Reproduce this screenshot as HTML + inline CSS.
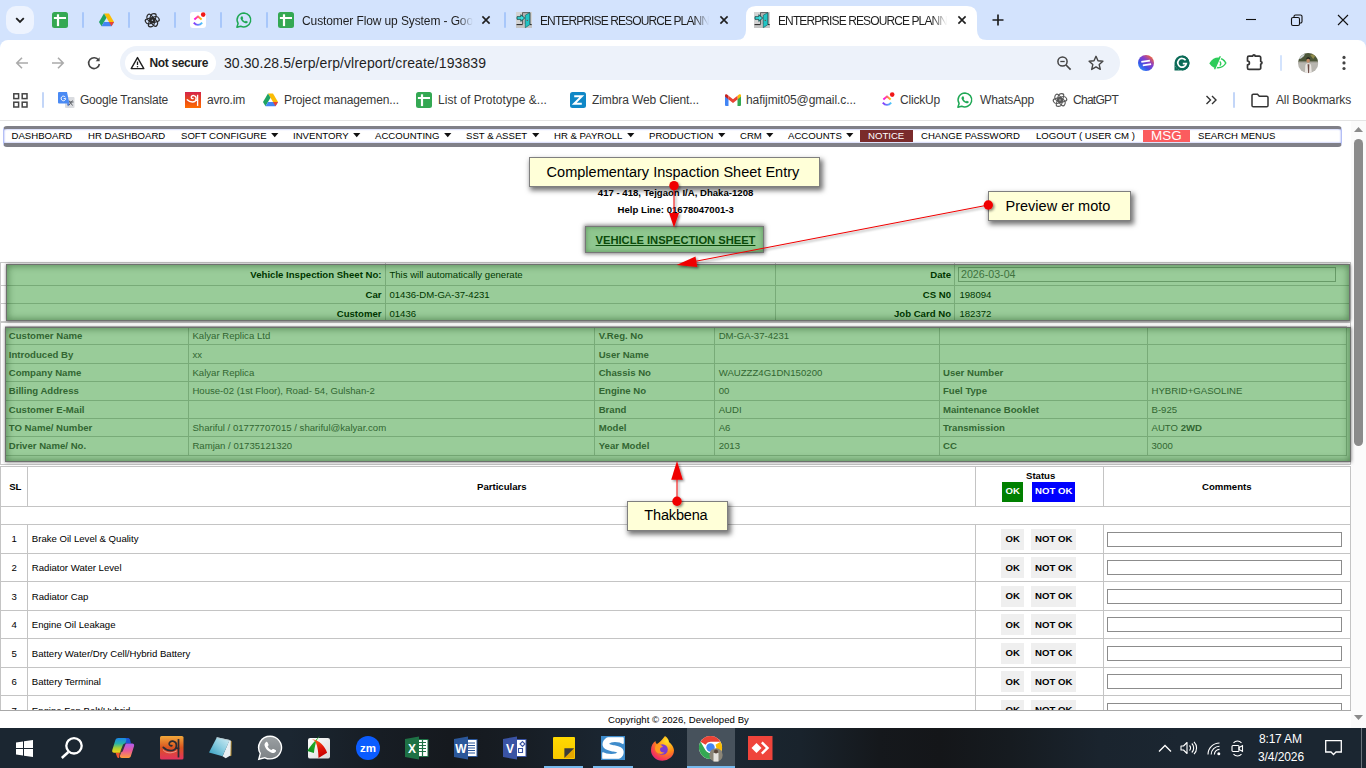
<!DOCTYPE html>
<html lang="en"><head><meta charset="utf-8"><title>ENTERPRISE RESOURCE PLANNING</title>
<style>
html,body{margin:0;padding:0}
body{width:1366px;height:768px;overflow:hidden;position:relative;background:#fff;font-family:"Liberation Sans",sans-serif;}
.t{position:absolute;white-space:nowrap;}
.a{position:absolute;}
#tabbar{position:absolute;left:0;top:0;width:1366px;height:50px;background:#d3e3fd;}
#toolbar{position:absolute;left:0;top:40px;width:1366px;height:42px;background:#fff;border-radius:8px 8px 0 0;}
#bm{position:absolute;left:0;top:82px;width:1366px;height:38px;background:#fff;border-bottom:1px solid #e4e4e4;}
#page{position:absolute;left:0;top:121px;width:1366px;height:607px;background:#fff;overflow:hidden;}
#taskbar{position:absolute;left:0;top:728px;width:1366px;height:40px;background:linear-gradient(90deg,#1b2631 0,#1b2631 290px,#171d24 380px,#15191e 450px,#171d24 520px,#1a2530 600px,#1b2732 720px,#19232c 800px,#15181c 880px,#141619 940px,#161b20 1010px,#1a242e 1100px,#1b2631 1180px,#1b2631 100%);}
.sep{position:absolute;width:2px;border-radius:1px;background:#a8c7fa;}
.fade{-webkit-mask-image:linear-gradient(90deg,#000 calc(100% - 15px),transparent);mask-image:linear-gradient(90deg,#000 calc(100% - 15px),transparent);overflow:hidden;}
svg{position:absolute;overflow:visible}
table{border-collapse:collapse;}
</style></head><body>

<div id="tabbar">
<div class="a" style="left:6px;top:6px;width:28px;height:28px;border-radius:10px;background:#edf3fe"></div>
<svg style="left:14px;top:14px" width="12" height="12" viewBox="0 0 12 12"><path d="M2.2 4.2 L6 8 L9.8 4.2" fill="none" stroke="#1f1f1f" stroke-width="1.8"/></svg>
<svg style="left:52px;top:12px" width="16" height="16" viewBox="0 0 16 16"><rect width="16" height="16" rx="2.500" fill="#34a853"/><path d="M1.900 6h12.100" stroke="#fff" stroke-width="2" fill="none"/><path d="M6 2.300v11.800" stroke="#fff" stroke-width="2.200" fill="none"/></svg>
<div class="sep" style="left:82px;top:12px;height:16px"></div>
<svg style="left:99px;top:13px" width="15" height="14" viewBox="0 0 15 14"><path d="M5 0.5h5L15 9h-5z" fill="#fbbc04"/><path d="M5 0.5L0 9l2.5 4.3L7.5 4.8z" fill="#1ea362"/><path d="M2.5 13.3h10L15 9H5z" fill="#4285f4"/><path d="M10 9h5l-2.5 4.3z" fill="#ea4335"/></svg>
<div class="sep" style="left:128px;top:12px;height:16px"></div>
<svg style="left:145px;top:12.7px" width="14.5" height="14.5" viewBox="-8 -8 16 16"><g fill="none" stroke="#2a2a2a" stroke-width="1.25"><rect x="-3.100" y="-7.300" width="6.200" height="8.800" rx="3.100" transform="rotate(0) skewX(-14)"/><rect x="-3.100" y="-7.300" width="6.200" height="8.800" rx="3.100" transform="rotate(60) skewX(-14)"/><rect x="-3.100" y="-7.300" width="6.200" height="8.800" rx="3.100" transform="rotate(120) skewX(-14)"/><rect x="-3.100" y="-7.300" width="6.200" height="8.800" rx="3.100" transform="rotate(180) skewX(-14)"/><rect x="-3.100" y="-7.300" width="6.200" height="8.800" rx="3.100" transform="rotate(240) skewX(-14)"/><rect x="-3.100" y="-7.300" width="6.200" height="8.800" rx="3.100" transform="rotate(300) skewX(-14)"/></g></svg>
<div class="sep" style="left:174px;top:12px;height:16px"></div>
<svg style="left:190px;top:12px" width="16" height="16" viewBox="0 0 16 16"><defs><linearGradient id="cu190" x1="0" x2="1"><stop offset="0" stop-color="#8930fd"/><stop offset="1" stop-color="#49ccf9"/></linearGradient><linearGradient id="cv190" x1="0" x2="1"><stop offset="0" stop-color="#ff02f0"/><stop offset="1" stop-color="#ffc800"/></linearGradient></defs><rect width="16" height="16" rx="3" fill="#fff"/><path d="M3.8 10.6c2.4 3 6 3 8.4 0" fill="none" stroke="url(#cu190)" stroke-width="1.9"/><path d="M4.4 7.4L8 4.4l3.6 3" fill="none" stroke="url(#cv190)" stroke-width="1.9"/><circle cx="13.2" cy="2.6" r="2.3" fill="#f01818"/></svg>
<div class="sep" style="left:220px;top:12px;height:16px"></div>
<svg style="left:236px;top:12px" width="16" height="16" viewBox="0 0 16 16"><path d="M8.100 .900a7 7 0 0 0-6 10.600L.900 15.200l3.800-1A7 7 0 1 0 8.100 .900z" fill="none" stroke="#1fa855" stroke-width="1.500" stroke-linejoin="round"/><path d="M5.400 4.500c.3-.4.900-.4 1.100.1l.6 1.300c.1.300.1.600-.2.800l-.4.400c.6 1.100 1.400 1.900 2.500 2.400l.5-.5c.2-.2.500-.3.800-.1l1.200.6c.4.200.5.700.1 1-.6.700-1.300 1-2.200.8-2.300-.6-4.300-2.500-4.900-4.700-.2-.8.100-1.500.9-2.100z" fill="#1fa855"/></svg>
<div class="sep" style="left:266px;top:12px;height:16px"></div>
<svg style="left:278px;top:12px" width="16" height="16" viewBox="0 0 16 16"><rect width="16" height="16" rx="2.500" fill="#34a853"/><path d="M1.900 6h12.100" stroke="#fff" stroke-width="2" fill="none"/><path d="M6 2.300v11.800" stroke="#fff" stroke-width="2.200" fill="none"/></svg>
<span class="t fade" style="left:302px;top:12.70px;line-height:17px;font-size:12px;color:#1f1f1f;letter-spacing:-0.105px;width:171px;">Customer Flow up System - Goo</span>
<svg style="left:480px;top:14px" width="12" height="12" viewBox="-6 -6 12 12"><path d="M-3.6 -3.6L3.6 3.6M3.6 -3.6L-3.6 3.6" stroke="#1f1f1f" stroke-width="1.6" fill="none"/></svg>
<div class="sep" style="left:504px;top:12px;height:16px"></div>
<svg style="left:516px;top:12px" width="16" height="16" viewBox="0 0 16 16"><rect width="16" height="16" fill="#d2d2d2"/><rect y="13" width="16" height="3" fill="#c4c4c4"/><path d="M6.500 12.400V.600H14v11.800" fill="#b4b4b4" stroke="#555" stroke-width=".9"/><path d="M.500 12.600H6.500M14 12.600h1.700" stroke="#222" stroke-width="1"/><path d="M13.700 .700L9.300 3.200v12.500l4.400-2.900z" fill="#20c4c4" stroke="#0c5a5a" stroke-width=".6"/><circle cx="11.300" cy="8.300" r=".65" fill="#7a3a3a"/><path d="M1 4.700h3.800V2.700L8.700 6 4.800 9.400V7.300H1z" fill="#3ddede" stroke="#0a3f3f" stroke-width=".8" stroke-linejoin="round"/></svg>
<span class="t fade" style="left:540px;top:12.70px;line-height:17px;font-size:12px;color:#1f1f1f;letter-spacing:-0.893px;width:169px;">ENTERPRISE RESOURCE PLANNI</span>
<svg style="left:718px;top:14px" width="12" height="12" viewBox="-6 -6 12 12"><path d="M-3.6 -3.6L3.6 3.6M3.6 -3.6L-3.6 3.6" stroke="#1f1f1f" stroke-width="1.6" fill="none"/></svg>
<svg style="left:736px;top:6px" width="256" height="34" viewBox="0 0 256 34"><path d="M0 34 Q10 34 10 24 V10 Q10 0 20 0 H231 Q241 0 241 10 V24 Q241 34 251 34 Z" fill="#fff"/></svg>
<svg style="left:754px;top:12px" width="16" height="16" viewBox="0 0 16 16"><rect width="16" height="16" fill="#d2d2d2"/><rect y="13" width="16" height="3" fill="#c4c4c4"/><path d="M6.500 12.400V.600H14v11.800" fill="#b4b4b4" stroke="#555" stroke-width=".9"/><path d="M.500 12.600H6.500M14 12.600h1.700" stroke="#222" stroke-width="1"/><path d="M13.700 .700L9.300 3.200v12.500l4.400-2.900z" fill="#20c4c4" stroke="#0c5a5a" stroke-width=".6"/><circle cx="11.300" cy="8.300" r=".65" fill="#7a3a3a"/><path d="M1 4.700h3.800V2.700L8.700 6 4.800 9.400V7.300H1z" fill="#3ddede" stroke="#0a3f3f" stroke-width=".8" stroke-linejoin="round"/></svg>
<span class="t fade" style="left:778px;top:12.70px;line-height:17px;font-size:12px;color:#1f1f1f;letter-spacing:-0.893px;width:169px;">ENTERPRISE RESOURCE PLANNI</span>
<svg style="left:956px;top:14px" width="12" height="12" viewBox="-6 -6 12 12"><path d="M-3.6 -3.6L3.6 3.6M3.6 -3.6L-3.6 3.6" stroke="#1f1f1f" stroke-width="1.6" fill="none"/></svg>
<svg style="left:991px;top:13px" width="14" height="14" viewBox="0 0 14 14"><path d="M7 1.500v11M1.500 7h11" stroke="#1f1f1f" stroke-width="1.7" fill="none"/></svg>
<svg style="left:1240px;top:10px" width="120" height="20" viewBox="0 0 120 20"><path d="M6 9.500h10" stroke="#111" stroke-width="1.100" fill="none"/><rect x="51.500" y="7.500" width="8" height="8" rx="1.500" fill="none" stroke="#111" stroke-width="1.100"/><path d="M54 7.500V6.500a1.500 1.500 0 0 1 1.500-1.500h5a1.500 1.500 0 0 1 1.500 1.500v5a1.500 1.500 0 0 1-1.500 1.500h-1" fill="none" stroke="#111" stroke-width="1.100"/><path d="M98 5l10 10M108 5l-10 10" stroke="#111" stroke-width="1.100" fill="none"/></svg>
</div>
<div id="toolbar"></div>
<svg style="left:15px;top:56px" width="14" height="14" viewBox="0 0 14 14"><path d="M13 7H2M7 1.800L1.800 7 7 12.200" stroke="#ababab" stroke-width="1.600" fill="none"/></svg>
<svg style="left:51px;top:56px" width="14" height="14" viewBox="0 0 14 14"><path d="M1 7h11M7 1.800L12.200 7 7 12.200" stroke="#ababab" stroke-width="1.600" fill="none"/></svg>
<svg style="left:87px;top:56px" width="14" height="14" viewBox="0 0 14 14"><path d="M11.600 4.200A5.400 5.400 0 1 0 12.400 8" stroke="#444" stroke-width="1.600" fill="none"/><path d="M12.600 1.200v4h-4z" fill="#444"/></svg>
<div class="a" style="left:120px;top:46px;width:1000px;height:34px;border-radius:17px;background:#edf2fa"></div>
<div class="a" style="left:125px;top:51px;width:91px;height:24px;border-radius:12px;background:#fff"></div>
<svg style="left:130px;top:56px" width="15" height="14" viewBox="0 0 15 14"><path d="M7.500 1.600L13.800 12.600H1.200z" fill="none" stroke="#1f1f1f" stroke-width="1.400" stroke-linejoin="round"/><path d="M7.500 5.600v3.400" stroke="#1f1f1f" stroke-width="1.300"/><circle cx="7.500" cy="10.700" r=".8" fill="#1f1f1f"/></svg>
<span class="t" style="left:149.5px;top:54.50px;line-height:17px;font-size:12px;color:#1f1f1f;letter-spacing:-0.352px;font-weight:bold;">Not secure</span>
<span class="t" style="left:224px;top:53.40px;line-height:20px;font-size:14px;color:#1f1f1f;letter-spacing:0.088px;">30.30.28.5/erp/erp/vlreport/create/193839</span>
<svg style="left:1056px;top:55px" width="16" height="16" viewBox="0 0 16 16"><circle cx="6.500" cy="6.500" r="4.600" fill="none" stroke="#444" stroke-width="1.500"/><path d="M10 10l4.600 4.600" stroke="#444" stroke-width="1.700"/><path d="M4.300 6.500h4.400" stroke="#444" stroke-width="1.300"/></svg>
<svg style="left:1088px;top:55px" width="16" height="16" viewBox="0 0 16 16"><path d="M8 1.300l2 4.500 4.900.5-3.700 3.300 1.100 4.800L8 11.900l-4.300 2.500 1.100-4.800L1.100 6.300l4.900-.5z" fill="none" stroke="#444" stroke-width="1.400" stroke-linejoin="round"/></svg>
<svg style="left:1138px;top:55px" width="16" height="16" viewBox="0 0 16 16"><defs><linearGradient id="ex1" x1=".15" y1=".9" x2=".85" y2=".1"><stop offset="0" stop-color="#2f8af5"/><stop offset=".3" stop-color="#3f4fe6"/><stop offset=".65" stop-color="#8a3fc8"/><stop offset="1" stop-color="#f0643c"/></linearGradient></defs><circle cx="8" cy="8" r="8" fill="url(#ex1)"/><path d="M3.300 6.900l8.600-1.300M4.800 10.400l8.300-1.300" stroke="#fff" stroke-width="1.800"/></svg>
<svg style="left:1174px;top:55px" width="16" height="16" viewBox="0 0 16 16"><path d="M8 .500a7.500 7.500 0 1 1-7.500 7.500V15.500H8" fill="#0b6b57"/><circle cx="8" cy="8" r="7.500" fill="#0b6b57"/><path d="M11.600 5.300A4.300 4.300 0 1 0 12.300 8.600H8.800" fill="none" stroke="#fff" stroke-width="1.700"/></svg>
<svg style="left:1209px;top:55px" width="18" height="16" viewBox="0 0 18 16"><path d="M1.200 8.300C3.500 4.800 6.300 3.300 9.300 3.300s5.700 1.500 7.500 4.700c-1.800 3.300-4.700 4.700-7.700 4.700s-5.800-1.400-7.900-4.400z" fill="none" stroke="#2ecc5a" stroke-width="1.500"/><path d="M1.200 8.300C3.500 4.800 6.300 3.300 9.300 3.300l1.800.2-3.800 9-1.500-.5C4 11.300 2.400 10 1.200 8.300z" fill="#2ecc5a"/><path d="M12.300 1.500L6.300 14.500" stroke="#fff" stroke-width="1.500"/><path d="M11.300 1.200L5.600 14.200" stroke="#2ecc5a" stroke-width="1.400"/><path d="M10.800 6.300a3.200 3.200 0 0 1 0 4.400" fill="none" stroke="#2ecc5a" stroke-width="1.200"/></svg>
<svg style="left:1245px;top:54px" width="18" height="18" viewBox="0 0 18 18"><path d="M4 2.200H7.600a1.300 1.300 0 0 1 2.600 0H14.200a1.500 1.500 0 0 1 1.500 1.500V7.500a1.300 1.300 0 0 1 0 2.600V13.900a1.500 1.500 0 0 1-1.500 1.500H4a1.500 1.500 0 0 1-1.500-1.500V10.800a1.900 1.900 0 0 0 0-3.800V3.700a1.500 1.500 0 0 1 1.500-1.500z" fill="none" stroke="#333" stroke-width="1.700" stroke-linejoin="round"/></svg>
<div class="sep" style="left:1280px;top:55px;height:16px;background:#d3e3fd"></div>
<svg style="left:1298px;top:52.800px" width="20.300" height="20.300" viewBox="0 0 20 20"><defs><clipPath id="av"><circle cx="10" cy="10" r="10"/></clipPath></defs><g clip-path="url(#av)"><rect width="20" height="20" fill="#b8b6b0"/><rect width="20" height="8.600" fill="#4c5639"/><path d="M0 0h7l-1 3-3 2.500-3 1z" fill="#cfd6d8"/><path d="M12 2l3-1 2 2-2 3z" fill="#8f8a4a"/><rect y="8.200" width="20" height="1" fill="#8a8c7c"/><path d="M6.800 20l.4-7.500c.1-1.500 1-2.400 2.800-2.400s2.900.9 3 2.400l.6 7.500z" fill="#ebe7e3"/><path d="M9.400 11l.6 9h.9l.3-9z" fill="#6a4a44"/><ellipse cx="10" cy="7.600" rx="1.700" ry="2" fill="#c48c68"/><path d="M8.100 6.700c0-1.700.9-2.500 2-2.500s2 .8 1.900 2.300c-.5-.8-1.300-1.100-2.200-1-1 .1-1.500.5-1.700 1.200z" fill="#1a1818"/></g></svg>
<svg style="left:1341px;top:55px" width="6" height="16" viewBox="0 0 6 16"><circle cx="3" cy="2.400" r="1.600" fill="#444"/><circle cx="3" cy="7.900" r="1.600" fill="#444"/><circle cx="3" cy="13.500" r="1.600" fill="#444"/></svg>
<div id="bm"></div>
<svg style="left:13px;top:93px" width="15" height="15" viewBox="0 0 15 15"><g fill="none" stroke="#444" stroke-width="1.500"><rect x=".8" y=".8" width="4.800" height="4.800"/><rect x="9.200" y=".8" width="4.800" height="4.800"/><rect x=".8" y="9.200" width="4.800" height="4.800"/><rect x="9.200" y="9.200" width="4.800" height="4.800"/></g></svg>
<div class="sep" style="left:42px;top:92px;height:16px;background:#c3d6f8"></div>
<svg style="left:58px;top:92px" width="17" height="17" viewBox="0 0 17 17"><rect x="7" y="5" width="9.500" height="11" rx="1" fill="#dadce0"/><path d="M11 8.500l3.500 5M14.500 8.500l-3.800 5M10.500 10h5" stroke="#5f6368" stroke-width="1" fill="none"/><path d="M1 0h8l2.300 11.500H1a1 1 0 0 1-1-1V1a1 1 0 0 1 1-1z" fill="#4a8af4"/><path d="M9 11.500l2.300 0 -1.300 3z" fill="#3367d6"/><path d="M7.400 5.300A2.300 2.300 0 1 0 7.700 6.600H5.600" fill="none" stroke="#fff" stroke-width="1"/></svg>
<span class="t" style="left:80px;top:91.50px;line-height:17px;font-size:12px;color:#383838;letter-spacing:-0.212px;">Google Translate</span>
<svg style="left:185px;top:92px" width="16" height="16" viewBox="0 0 23 23"><defs><linearGradient id="avg185" x1="0" y1="0" x2="0" y2="1"><stop offset="0" stop-color="#d4244c"/><stop offset=".5" stop-color="#e8481a"/><stop offset="1" stop-color="#ff6c00"/></linearGradient></defs><rect width="23" height="23" fill="url(#avg185)"/><path d="M18.100 4V20" stroke="#fff" stroke-width="1.900" fill="none"/><path d="M11.600 9.400c-1.300.5-2.700-.4-2.600-1.900.1-1.700 1.800-2.700 3.600-2.400 2.300.4 3.600 2.500 3.400 4.800-.3 2.800-2.600 4.600-5.400 4.500-3-.1-5.600-1.300-7.400-3.200M15.800 11.500l2.300.8" fill="none" stroke="#fff" stroke-width="1.900" stroke-linecap="round"/></svg>
<span class="t" style="left:207px;top:91.50px;line-height:17px;font-size:12px;color:#383838;letter-spacing:-0.191px;">avro.im</span>
<svg style="left:263px;top:93px" width="15" height="14" viewBox="0 0 15 14"><path d="M5 0.5h5L15 9h-5z" fill="#fbbc04"/><path d="M5 0.5L0 9l2.5 4.3L7.5 4.8z" fill="#1ea362"/><path d="M2.5 13.3h10L15 9H5z" fill="#4285f4"/><path d="M10 9h5l-2.5 4.3z" fill="#ea4335"/></svg>
<span class="t" style="left:284px;top:91.50px;line-height:17px;font-size:12px;color:#383838;letter-spacing:-0.120px;">Project managemen...</span>
<svg style="left:416px;top:92px" width="16" height="16" viewBox="0 0 16 16"><rect width="16" height="16" rx="2.500" fill="#34a853"/><path d="M1.900 6h12.100" stroke="#fff" stroke-width="2" fill="none"/><path d="M6 2.300v11.800" stroke="#fff" stroke-width="2.200" fill="none"/></svg>
<span class="t" style="left:438px;top:91.50px;line-height:17px;font-size:12px;color:#383838;letter-spacing:0.043px;">List of Prototype &...</span>
<svg style="left:570px;top:92px" width="16" height="16" viewBox="0 0 16 16"><rect width="16" height="16" rx="2.500" fill="#0f87c6"/><path d="M4.200 4.300h7.600L4.200 11.700h7.600" fill="none" stroke="#fff" stroke-width="2"/></svg>
<span class="t" style="left:592px;top:91.50px;line-height:17px;font-size:12px;color:#383838;letter-spacing:-0.107px;">Zimbra Web Client...</span>
<svg style="left:725px;top:94px" width="16" height="12" viewBox="0 0 16 12"><path d="M0 1.200V11a1 1 0 0 0 1 1h2.500V4.800z" fill="#4285f4"/><path d="M16 1.200V11a1 1 0 0 1-1 1h-2.500V4.800z" fill="#34a853"/><path d="M12.500 1.800L14 .6c.9-.6 2-.1 2 1v1L12.500 5.500z" fill="#fbbc04"/><path d="M3.500 1.800L2 .6C1.100 0 0 .5 0 1.600v1L3.500 5.500z" fill="#c5221f"/><path d="M3.500 1.800L8 5.300l4.500-3.500v3.700L8 9 3.500 5.500z" fill="#ea4335"/></svg>
<span class="t" style="left:746px;top:91.50px;line-height:17px;font-size:12px;color:#383838;letter-spacing:-0.074px;">hafijmit05@gmail.c...</span>
<svg style="left:879px;top:92px" width="16" height="16" viewBox="0 0 16 16"><defs><linearGradient id="cu879" x1="0" x2="1"><stop offset="0" stop-color="#8930fd"/><stop offset="1" stop-color="#49ccf9"/></linearGradient><linearGradient id="cv879" x1="0" x2="1"><stop offset="0" stop-color="#ff02f0"/><stop offset="1" stop-color="#ffc800"/></linearGradient></defs><rect width="16" height="16" rx="3" fill="#fff"/><path d="M3.8 10.6c2.4 3 6 3 8.4 0" fill="none" stroke="url(#cu879)" stroke-width="1.9"/><path d="M4.4 7.4L8 4.4l3.6 3" fill="none" stroke="url(#cv879)" stroke-width="1.9"/><circle cx="13.2" cy="2.6" r="2.3" fill="#f01818"/></svg>
<span class="t" style="left:900px;top:91.50px;line-height:17px;font-size:12px;color:#383838;letter-spacing:-0.191px;">ClickUp</span>
<svg style="left:957px;top:92px" width="16" height="16" viewBox="0 0 16 16"><path d="M8.100 .900a7 7 0 0 0-6 10.600L.900 15.200l3.800-1A7 7 0 1 0 8.100 .900z" fill="none" stroke="#1fa855" stroke-width="1.500" stroke-linejoin="round"/><path d="M5.400 4.500c.3-.4.900-.4 1.100.1l.6 1.300c.1.300.1.600-.2.800l-.4.400c.6 1.100 1.400 1.900 2.500 2.400l.5-.5c.2-.2.500-.3.800-.1l1.200.6c.4.200.5.700.1 1-.6.700-1.300 1-2.200.8-2.300-.6-4.300-2.500-4.900-4.700-.2-.8.100-1.500.9-2.100z" fill="#1fa855"/></svg>
<span class="t" style="left:980px;top:91.50px;line-height:17px;font-size:12px;color:#383838;letter-spacing:-0.170px;">WhatsApp</span>
<svg style="left:1052.5px;top:92.7px" width="14" height="14" viewBox="-8 -8 16 16"><g fill="none" stroke="#5a5a5a" stroke-width="1.25"><rect x="-3.100" y="-7.300" width="6.200" height="8.800" rx="3.100" transform="rotate(0) skewX(-14)"/><rect x="-3.100" y="-7.300" width="6.200" height="8.800" rx="3.100" transform="rotate(60) skewX(-14)"/><rect x="-3.100" y="-7.300" width="6.200" height="8.800" rx="3.100" transform="rotate(120) skewX(-14)"/><rect x="-3.100" y="-7.300" width="6.200" height="8.800" rx="3.100" transform="rotate(180) skewX(-14)"/><rect x="-3.100" y="-7.300" width="6.200" height="8.800" rx="3.100" transform="rotate(240) skewX(-14)"/><rect x="-3.100" y="-7.300" width="6.200" height="8.800" rx="3.100" transform="rotate(300) skewX(-14)"/></g></svg>
<span class="t" style="left:1073px;top:91.50px;line-height:17px;font-size:12px;color:#383838;letter-spacing:-0.717px;">ChatGPT</span>
<svg style="left:1205px;top:95px" width="13" height="10" viewBox="0 0 13 10"><path d="M1.500 1l4 4-4 4M7 1l4 4-4 4" fill="none" stroke="#333" stroke-width="1.400"/></svg>
<div class="sep" style="left:1233px;top:92px;height:16px;background:#c3d6f8"></div>
<svg style="left:1251px;top:93px" width="18" height="15" viewBox="0 0 18 15"><path d="M1 2.500a1.300 1.300 0 0 1 1.300-1.300h4.200l1.800 2h7.400a1.300 1.300 0 0 1 1.300 1.300v8a1.300 1.300 0 0 1-1.300 1.300H2.300A1.300 1.300 0 0 1 1 12.500z" fill="none" stroke="#333" stroke-width="1.500"/></svg>
<span class="t" style="left:1276px;top:91.50px;line-height:17px;font-size:12px;color:#383838;letter-spacing:-0.130px;">All Bookmarks</span>
<div id="page">
<div class="a" style="left:3px;top:5px;width:1337px;height:14px;border:1px solid #b4bff6;border-top:3px solid #808088;border-bottom:4px solid #808088;border-radius:4px;background:#fff;box-shadow:inset 0 0 2px #7d8ff0"></div>
<span class="t" style="left:11.5px;top:7.60px;line-height:13px;font-size:9.6px;color:#000;">DASHBOARD</span>
<span class="t" style="left:88px;top:7.60px;line-height:13px;font-size:9.6px;color:#000;">HR DASHBOARD</span>
<span class="t" style="left:181px;top:7.60px;line-height:13px;font-size:9.6px;color:#000;">SOFT CONFIGURE</span>
<svg style="left:271.2px;top:12.400000000000006px" width="7.500" height="4.500" viewBox="0 0 8 5"><path d="M0 0h8L4 4.600z" fill="#111"/></svg>
<span class="t" style="left:293px;top:7.60px;line-height:13px;font-size:9.6px;color:#000;">INVENTORY</span>
<svg style="left:353.2px;top:12.400000000000006px" width="7.500" height="4.500" viewBox="0 0 8 5"><path d="M0 0h8L4 4.600z" fill="#111"/></svg>
<span class="t" style="left:375px;top:7.60px;line-height:13px;font-size:9.6px;color:#000;">ACCOUNTING</span>
<svg style="left:444.0px;top:12.400000000000006px" width="7.500" height="4.500" viewBox="0 0 8 5"><path d="M0 0h8L4 4.600z" fill="#111"/></svg>
<span class="t" style="left:466px;top:7.60px;line-height:13px;font-size:9.6px;color:#000;">SST &amp; ASSET</span>
<svg style="left:531.7px;top:12.400000000000006px" width="7.500" height="4.500" viewBox="0 0 8 5"><path d="M0 0h8L4 4.600z" fill="#111"/></svg>
<span class="t" style="left:554px;top:7.60px;line-height:13px;font-size:9.6px;color:#000;">HR &amp; PAYROLL</span>
<svg style="left:627.0px;top:12.400000000000006px" width="7.500" height="4.500" viewBox="0 0 8 5"><path d="M0 0h8L4 4.600z" fill="#111"/></svg>
<span class="t" style="left:649px;top:7.60px;line-height:13px;font-size:9.6px;color:#000;">PRODUCTION</span>
<svg style="left:718.0px;top:12.400000000000006px" width="7.500" height="4.500" viewBox="0 0 8 5"><path d="M0 0h8L4 4.600z" fill="#111"/></svg>
<span class="t" style="left:740px;top:7.60px;line-height:13px;font-size:9.6px;color:#000;">CRM</span>
<svg style="left:766.4px;top:12.400000000000006px" width="7.500" height="4.500" viewBox="0 0 8 5"><path d="M0 0h8L4 4.600z" fill="#111"/></svg>
<span class="t" style="left:788px;top:7.60px;line-height:13px;font-size:9.6px;color:#000;">ACCOUNTS</span>
<svg style="left:846.4px;top:12.400000000000006px" width="7.500" height="4.500" viewBox="0 0 8 5"><path d="M0 0h8L4 4.600z" fill="#111"/></svg>
<div class="a" style="left:860px;top:9px;width:53px;height:12px;background:#7a2b2b"></div>
<span class="t" style="left:868px;top:7.60px;line-height:13px;font-size:9.6px;color:#fff;">NOTICE</span>
<span class="t" style="left:921px;top:7.60px;line-height:13px;font-size:9.6px;color:#000;">CHANGE PASSWORD</span>
<span class="t" style="left:1036px;top:7.60px;line-height:13px;font-size:9.6px;color:#000;">LOGOUT ( USER CM )</span>
<div class="a" style="left:1143px;top:9px;width:47px;height:12px;background:#fb5c5e"></div>
<span class="t" style="left:1151px;top:4.90px;line-height:19px;font-size:13.44px;color:#fff;">MSG</span>
<span class="t" style="left:1198px;top:7.60px;line-height:13px;font-size:9.6px;color:#000;">SEARCH MENUS</span>
<span class="t" style="left:597.8px;top:65.20px;line-height:13px;font-size:9.6px;color:#000;font-weight:bold;">417 - 418, Tejgaon I/A, Dhaka-1208</span>
<span class="t" style="left:617.6px;top:81.50px;line-height:13px;font-size:9.6px;color:#000;font-weight:bold;">Help Line: 01678047001-3</span>
<div class="a" style="left:0px;top:141px;width:1351px;height:60px;border:1px solid #c8c8c8;box-sizing:border-box"></div>
<div class="a" style="left:0px;top:164px;width:1351px;height:1px;background:#c8c8c8"></div>
<div class="a" style="left:0px;top:182px;width:1351px;height:1px;background:#c8c8c8"></div>
<div class="a" style="left:385px;top:142px;width:1px;height:58px;background:#c8c8c8"></div>
<div class="a" style="left:775px;top:142px;width:1px;height:58px;background:#c8c8c8"></div>
<div class="a" style="left:954px;top:142px;width:1px;height:58px;background:#c8c8c8"></div>
<span class="t" style="right:984.5px;top:146.8px;line-height:14px;font-size:9.6px;font-weight:bold;color:#000">Vehicle Inspection Sheet No:</span>
<span class="t" style="left:389.4px;top:147.30px;line-height:13px;font-size:9.6px;color:#000;">This will automatically generate</span>
<span class="t" style="right:415px;top:146.8px;line-height:14px;font-size:9.6px;font-weight:bold;color:#000">Date</span>
<span class="t" style="right:984.5px;top:166.5px;line-height:14px;font-size:9.6px;font-weight:bold;color:#000">Car</span>
<span class="t" style="left:389.4px;top:167.00px;line-height:13px;font-size:9.6px;color:#000;">01436-DM-GA-37-4231</span>
<span class="t" style="right:415px;top:166.5px;line-height:14px;font-size:9.6px;font-weight:bold;color:#000">CS N0</span>
<span class="t" style="left:959.4px;top:167.00px;line-height:13px;font-size:9.6px;color:#000;">198094</span>
<span class="t" style="right:984.5px;top:185.60000000000002px;line-height:14px;font-size:9.6px;font-weight:bold;color:#000">Customer</span>
<span class="t" style="left:389.4px;top:186.10px;line-height:13px;font-size:9.6px;color:#000;">01436</span>
<span class="t" style="right:415px;top:185.60000000000002px;line-height:14px;font-size:9.6px;font-weight:bold;color:#000">Job Card No</span>
<span class="t" style="left:959.4px;top:186.10px;line-height:13px;font-size:9.6px;color:#000;">182372</span>
<div class="a" style="left:958px;top:145.5px;width:378px;height:15px;border:1px solid #adadad;box-sizing:border-box;background:#fff"></div>
<span class="t" style="left:961px;top:145.80px;line-height:15px;font-size:10.67px;color:#6a6a6a;">2026-03-04</span>
<div class="a" style="left:0px;top:201px;width:1351px;height:143px;border:1px solid #c8c8c8;box-sizing:border-box"></div>
<div class="a" style="left:5px;top:205px;width:1342px;height:130px;border:1px solid #c8c8c8;box-sizing:border-box"></div>
<div class="a" style="left:5px;top:223px;width:1342px;height:1px;background:#c8c8c8"></div>
<div class="a" style="left:5px;top:242px;width:1342px;height:1px;background:#c8c8c8"></div>
<div class="a" style="left:5px;top:260px;width:1342px;height:1px;background:#c8c8c8"></div>
<div class="a" style="left:5px;top:279px;width:1342px;height:1px;background:#c8c8c8"></div>
<div class="a" style="left:5px;top:297px;width:1342px;height:1px;background:#c8c8c8"></div>
<div class="a" style="left:5px;top:315px;width:1342px;height:1px;background:#c8c8c8"></div>
<div class="a" style="left:188px;top:206px;width:1px;height:128px;background:#c8c8c8"></div>
<div class="a" style="left:594px;top:206px;width:1px;height:128px;background:#c8c8c8"></div>
<div class="a" style="left:714px;top:206px;width:1px;height:128px;background:#c8c8c8"></div>
<div class="a" style="left:939px;top:206px;width:1px;height:128px;background:#c8c8c8"></div>
<div class="a" style="left:1147px;top:206px;width:1px;height:128px;background:#c8c8c8"></div>
<span class="t" style="left:8.8px;top:208.30px;line-height:13px;font-size:9.6px;color:#555;font-weight:bold;">Customer Name</span>
<span class="t" style="left:192.4px;top:208.30px;line-height:13px;font-size:9.6px;color:#555;">Kalyar Replica Ltd</span>
<span class="t" style="left:598.7px;top:208.30px;line-height:13px;font-size:9.6px;color:#555;font-weight:bold;">V.Reg. No</span>
<span class="t" style="left:718.7px;top:208.30px;line-height:13px;font-size:9.6px;color:#555;">DM-GA-37-4231</span>
<span class="t" style="left:8.8px;top:227.20px;line-height:13px;font-size:9.6px;color:#555;font-weight:bold;">Introduced By</span>
<span class="t" style="left:192.4px;top:227.20px;line-height:13px;font-size:9.6px;color:#555;">xx</span>
<span class="t" style="left:598.7px;top:227.20px;line-height:13px;font-size:9.6px;color:#555;font-weight:bold;">User Name</span>
<span class="t" style="left:8.8px;top:245.20px;line-height:13px;font-size:9.6px;color:#555;font-weight:bold;">Company Name</span>
<span class="t" style="left:192.4px;top:245.20px;line-height:13px;font-size:9.6px;color:#555;">Kalyar Replica</span>
<span class="t" style="left:598.7px;top:245.20px;line-height:13px;font-size:9.6px;color:#555;font-weight:bold;">Chassis No</span>
<span class="t" style="left:718.7px;top:245.20px;line-height:13px;font-size:9.6px;color:#555;">WAUZZZ4G1DN150200</span>
<span class="t" style="left:943px;top:245.20px;line-height:13px;font-size:9.6px;color:#555;font-weight:bold;">User Number</span>
<span class="t" style="left:8.8px;top:263.30px;line-height:13px;font-size:9.6px;color:#555;font-weight:bold;">Billing Address</span>
<span class="t" style="left:192.4px;top:263.30px;line-height:13px;font-size:9.6px;color:#555;">House-02 (1st Floor), Road- 54, Gulshan-2</span>
<span class="t" style="left:598.7px;top:263.30px;line-height:13px;font-size:9.6px;color:#555;font-weight:bold;">Engine No</span>
<span class="t" style="left:718.7px;top:263.30px;line-height:13px;font-size:9.6px;color:#555;">00</span>
<span class="t" style="left:943px;top:263.30px;line-height:13px;font-size:9.6px;color:#555;font-weight:bold;">Fuel Type</span>
<span class="t" style="left:1151.5px;top:263.30px;line-height:13px;font-size:9.6px;color:#555;">HYBRID+GASOLINE</span>
<span class="t" style="left:8.8px;top:282.10px;line-height:13px;font-size:9.6px;color:#555;font-weight:bold;">Customer E-Mail</span>
<span class="t" style="left:598.7px;top:282.10px;line-height:13px;font-size:9.6px;color:#555;font-weight:bold;">Brand</span>
<span class="t" style="left:718.7px;top:282.10px;line-height:13px;font-size:9.6px;color:#555;">AUDI</span>
<span class="t" style="left:943px;top:282.10px;line-height:13px;font-size:9.6px;color:#555;font-weight:bold;">Maintenance Booklet</span>
<span class="t" style="left:1151.5px;top:282.10px;line-height:13px;font-size:9.6px;color:#555;">B-925</span>
<span class="t" style="left:8.8px;top:300.10px;line-height:13px;font-size:9.6px;color:#555;font-weight:bold;">TO Name/ Number</span>
<span class="t" style="left:192.4px;top:300.10px;line-height:13px;font-size:9.6px;color:#555;">Shariful / 01777707015 / shariful@kalyar.com</span>
<span class="t" style="left:598.7px;top:300.10px;line-height:13px;font-size:9.6px;color:#555;font-weight:bold;">Model</span>
<span class="t" style="left:718.7px;top:300.10px;line-height:13px;font-size:9.6px;color:#555;">A6</span>
<span class="t" style="left:943px;top:300.10px;line-height:13px;font-size:9.6px;color:#555;font-weight:bold;">Transmission</span>
<span class="t" style="left:1151.5px;top:300.10px;line-height:13px;font-size:9.6px;color:#555;">AUTO <b>2WD</b></span>
<span class="t" style="left:8.8px;top:318.20px;line-height:13px;font-size:9.6px;color:#555;font-weight:bold;">Driver Name/ No.</span>
<span class="t" style="left:192.4px;top:318.20px;line-height:13px;font-size:9.6px;color:#555;">Ramjan / 01735121320</span>
<span class="t" style="left:598.7px;top:318.20px;line-height:13px;font-size:9.6px;color:#555;font-weight:bold;">Year Model</span>
<span class="t" style="left:718.7px;top:318.20px;line-height:13px;font-size:9.6px;color:#555;">2013</span>
<span class="t" style="left:943px;top:318.20px;line-height:13px;font-size:9.6px;color:#555;font-weight:bold;">CC</span>
<span class="t" style="left:1151.5px;top:318.20px;line-height:13px;font-size:9.6px;color:#555;">3000</span>
<div class="a" style="left:0px;top:345px;width:1351px;height:300px;border:1px solid #c4c4c4;box-sizing:border-box"></div>
<div class="a" style="left:0px;top:385px;width:1351px;height:1px;background:#c4c4c4"></div>
<div class="a" style="left:0px;top:403px;width:1351px;height:1px;background:#c4c4c4"></div>
<div class="a" style="left:0px;top:432px;width:1351px;height:1px;background:#c4c4c4"></div>
<div class="a" style="left:0px;top:460px;width:1351px;height:1px;background:#c4c4c4"></div>
<div class="a" style="left:0px;top:489px;width:1351px;height:1px;background:#c4c4c4"></div>
<div class="a" style="left:0px;top:517px;width:1351px;height:1px;background:#c4c4c4"></div>
<div class="a" style="left:0px;top:546px;width:1351px;height:1px;background:#c4c4c4"></div>
<div class="a" style="left:0px;top:574px;width:1351px;height:1px;background:#c4c4c4"></div>
<div class="a" style="left:27px;top:345px;width:1px;height:40px;background:#c4c4c4"></div>
<div class="a" style="left:27px;top:403px;width:1px;height:187px;background:#c4c4c4"></div>
<div class="a" style="left:975px;top:345px;width:1px;height:40px;background:#c4c4c4"></div>
<div class="a" style="left:975px;top:403px;width:1px;height:187px;background:#c4c4c4"></div>
<div class="a" style="left:1103px;top:345px;width:1px;height:40px;background:#c4c4c4"></div>
<div class="a" style="left:1103px;top:403px;width:1px;height:187px;background:#c4c4c4"></div>
<span class="t" style="left:9.2px;top:359.30px;line-height:13px;font-size:9.6px;color:#000;font-weight:bold;">SL</span>
<span class="t" style="left:477px;top:359.30px;line-height:13px;font-size:9.6px;color:#000;font-weight:bold;">Particulars</span>
<span class="t" style="left:1026px;top:348.30px;line-height:13px;font-size:9.6px;color:#000;font-weight:bold;">Status</span>
<span class="t" style="left:1202px;top:359.30px;line-height:13px;font-size:9.6px;color:#000;font-weight:bold;">Comments</span>
<div class="a" style="left:1002px;top:361.3px;width:21px;height:19.700px;background:#008000"></div>
<span class="t" style="left:1005.5px;top:363.40px;line-height:13px;font-size:9.6px;color:#fff;font-weight:bold;">OK</span>
<div class="a" style="left:1032px;top:361.3px;width:43px;height:19.700px;background:#0000ff"></div>
<span class="t" style="left:1035px;top:363.40px;line-height:13px;font-size:9.6px;color:#fff;font-weight:bold;">NOT OK</span>
<span class="t" style="left:11.6px;top:411.40px;line-height:13px;font-size:9.6px;color:#000;">1</span>
<span class="t" style="left:31.8px;top:411.40px;line-height:13px;font-size:9.6px;color:#000;">Brake Oil Level &amp; Quality</span>
<div class="a" style="left:1001px;top:407.5px;width:23px;height:21px;background:#efefef"></div>
<span class="t" style="left:1005.5px;top:411.20px;line-height:13px;font-size:9.6px;color:#000;font-weight:bold;">OK</span>
<div class="a" style="left:1031px;top:407.5px;width:45px;height:21px;background:#efefef"></div>
<span class="t" style="left:1035px;top:411.20px;line-height:13px;font-size:9.6px;color:#000;font-weight:bold;">NOT OK</span>
<div class="a" style="left:1107px;top:410.5px;width:235px;height:15px;border:1px solid #8c8c8c;box-sizing:border-box;background:#fff"></div>
<span class="t" style="left:11.6px;top:440.20px;line-height:13px;font-size:9.6px;color:#000;">2</span>
<span class="t" style="left:31.8px;top:440.20px;line-height:13px;font-size:9.6px;color:#000;">Radiator Water Level</span>
<div class="a" style="left:1001px;top:436.0px;width:23px;height:21px;background:#efefef"></div>
<span class="t" style="left:1005.5px;top:439.70px;line-height:13px;font-size:9.6px;color:#000;font-weight:bold;">OK</span>
<div class="a" style="left:1031px;top:436.0px;width:45px;height:21px;background:#efefef"></div>
<span class="t" style="left:1035px;top:439.70px;line-height:13px;font-size:9.6px;color:#000;font-weight:bold;">NOT OK</span>
<div class="a" style="left:1107px;top:439.0px;width:235px;height:15px;border:1px solid #8c8c8c;box-sizing:border-box;background:#fff"></div>
<span class="t" style="left:11.6px;top:469.20px;line-height:13px;font-size:9.6px;color:#000;">3</span>
<span class="t" style="left:31.8px;top:469.20px;line-height:13px;font-size:9.6px;color:#000;">Radiator Cap</span>
<div class="a" style="left:1001px;top:464.5px;width:23px;height:21px;background:#efefef"></div>
<span class="t" style="left:1005.5px;top:468.20px;line-height:13px;font-size:9.6px;color:#000;font-weight:bold;">OK</span>
<div class="a" style="left:1031px;top:464.5px;width:45px;height:21px;background:#efefef"></div>
<span class="t" style="left:1035px;top:468.20px;line-height:13px;font-size:9.6px;color:#000;font-weight:bold;">NOT OK</span>
<div class="a" style="left:1107px;top:467.5px;width:235px;height:15px;border:1px solid #8c8c8c;box-sizing:border-box;background:#fff"></div>
<span class="t" style="left:11.6px;top:497.10px;line-height:13px;font-size:9.6px;color:#000;">4</span>
<span class="t" style="left:31.8px;top:497.10px;line-height:13px;font-size:9.6px;color:#000;">Engine Oil Leakage</span>
<div class="a" style="left:1001px;top:493.0px;width:23px;height:21px;background:#efefef"></div>
<span class="t" style="left:1005.5px;top:496.70px;line-height:13px;font-size:9.6px;color:#000;font-weight:bold;">OK</span>
<div class="a" style="left:1031px;top:493.0px;width:45px;height:21px;background:#efefef"></div>
<span class="t" style="left:1035px;top:496.70px;line-height:13px;font-size:9.6px;color:#000;font-weight:bold;">NOT OK</span>
<div class="a" style="left:1107px;top:496.0px;width:235px;height:15px;border:1px solid #8c8c8c;box-sizing:border-box;background:#fff"></div>
<span class="t" style="left:11.6px;top:526.10px;line-height:13px;font-size:9.6px;color:#000;">5</span>
<span class="t" style="left:31.8px;top:526.10px;line-height:13px;font-size:9.6px;color:#000;">Battery Water/Dry Cell/Hybrid Battery</span>
<div class="a" style="left:1001px;top:521.5px;width:23px;height:21px;background:#efefef"></div>
<span class="t" style="left:1005.5px;top:525.20px;line-height:13px;font-size:9.6px;color:#000;font-weight:bold;">OK</span>
<div class="a" style="left:1031px;top:521.5px;width:45px;height:21px;background:#efefef"></div>
<span class="t" style="left:1035px;top:525.20px;line-height:13px;font-size:9.6px;color:#000;font-weight:bold;">NOT OK</span>
<div class="a" style="left:1107px;top:524.5px;width:235px;height:15px;border:1px solid #8c8c8c;box-sizing:border-box;background:#fff"></div>
<span class="t" style="left:11.6px;top:554.20px;line-height:13px;font-size:9.6px;color:#000;">6</span>
<span class="t" style="left:31.8px;top:554.20px;line-height:13px;font-size:9.6px;color:#000;">Battery Terminal</span>
<div class="a" style="left:1001px;top:550.0px;width:23px;height:21px;background:#efefef"></div>
<span class="t" style="left:1005.5px;top:553.70px;line-height:13px;font-size:9.6px;color:#000;font-weight:bold;">OK</span>
<div class="a" style="left:1031px;top:550.0px;width:45px;height:21px;background:#efefef"></div>
<span class="t" style="left:1035px;top:553.70px;line-height:13px;font-size:9.6px;color:#000;font-weight:bold;">NOT OK</span>
<div class="a" style="left:1107px;top:553.0px;width:235px;height:15px;border:1px solid #8c8c8c;box-sizing:border-box;background:#fff"></div>
<span class="t" style="left:11.6px;top:582.90px;line-height:13px;font-size:9.6px;color:#000;">7</span>
<span class="t" style="left:31.8px;top:582.90px;line-height:13px;font-size:9.6px;color:#000;">Engine Fan Belt/Hybrid</span>
<div class="a" style="left:1001px;top:578.5px;width:23px;height:21px;background:#efefef"></div>
<span class="t" style="left:1005.5px;top:582.20px;line-height:13px;font-size:9.6px;color:#000;font-weight:bold;">OK</span>
<div class="a" style="left:1031px;top:578.5px;width:45px;height:21px;background:#efefef"></div>
<span class="t" style="left:1035px;top:582.20px;line-height:13px;font-size:9.6px;color:#000;font-weight:bold;">NOT OK</span>
<div class="a" style="left:1107px;top:581.5px;width:235px;height:15px;border:1px solid #8c8c8c;box-sizing:border-box;background:#fff"></div>
<div class="a" style="left:0;top:589px;width:1351px;height:18px;background:#fff;border-top:1px solid #a8a8a8"></div>
<span class="t" style="left:608px;top:592.20px;line-height:13px;font-size:9.6px;color:#000;letter-spacing:0.035px;">Copyright © 2026, Developed By</span>
<div class="a" style="left:1351px;top:0;width:15px;height:607px;background:#fbfbfb"></div>
<svg style="left:1354px;top:6px" width="9" height="5" viewBox="0 0 9 5"><path d="M0 5h9L4.500 0z" fill="#8b8b8b"/></svg>
<svg style="left:1354px;top:594px" width="9" height="5" viewBox="0 0 9 5"><path d="M0 0h9L4.500 5z" fill="#8b8b8b"/></svg>
<div class="a" style="left:1354px;top:17.80000000000001px;width:9px;height:307.500px;border-radius:4.500px;background:#8b8b8b"></div>
</div>
<div class="a" style="left:6px;top:264px;width:1344px;height:57px;background:rgba(0,128,0,0.4);border:1px solid #6e706e;box-sizing:border-box;box-shadow:0 0 3.500px .500px rgba(0,0,0,.55), inset 0 0 7px 1px rgba(0,50,0,.42)"></div>
<div class="a" style="left:5px;top:327px;width:1346px;height:135px;background:rgba(0,128,0,0.4);border:1px solid #6e706e;box-sizing:border-box;box-shadow:0 0 3.500px .500px rgba(0,0,0,.55), inset 0 0 7px 1px rgba(0,50,0,.42)"></div>
<div class="a" style="left:585px;top:226px;width:179px;height:27px;background:#8fc78f;border:1px solid #777;box-sizing:border-box;box-shadow:0 0 4px 1px rgba(0,0,0,.5), inset 0 0 5px rgba(0,60,0,.35)"></div>
<span class="t" style="left:595.6px;top:232.00px;line-height:16px;font-size:11.2px;color:#0a4a0a;letter-spacing:-0.023px;font-weight:bold;text-decoration:underline;">VEHICLE INSPECTION SHEET</span>
<div class="a" style="left:529px;top:157px;width:291px;height:29.5px;background:#ffffd8;border:1px solid #7f7f7f;box-sizing:border-box;box-shadow:2px 2.500px 5px 1px rgba(0,0,0,.55)"></div>
<span class="t" style="left:546.6px;top:161.50px;line-height:20px;font-size:14.53px;color:#000;letter-spacing:0.006px;">Complementary Inspaction Sheet Entry</span>
<div class="a" style="left:988px;top:191px;width:143px;height:29.5px;background:#ffffd8;border:1px solid #7f7f7f;box-sizing:border-box;box-shadow:2px 2.500px 5px 1px rgba(0,0,0,.55)"></div>
<span class="t" style="left:1005.5px;top:196.00px;line-height:20px;font-size:14.53px;color:#000;letter-spacing:0.002px;">Preview er moto</span>
<div class="a" style="left:627px;top:501px;width:100.5px;height:29.5px;background:#ffffd8;border:1px solid #7f7f7f;box-sizing:border-box;box-shadow:2px 2.500px 5px 1px rgba(0,0,0,.55)"></div>
<span class="t" style="left:644.3px;top:505.10px;line-height:20px;font-size:14.53px;color:#000;letter-spacing:-0.166px;">Thakbena</span>
<svg style="left:0;top:0" width="1366" height="768" viewBox="0 0 1366 768">
<defs><filter id="ds" x="-50%" y="-50%" width="200%" height="200%"><feDropShadow dx="1.5" dy="1.5" stdDeviation="1.2" flood-color="#000" flood-opacity=".45"/></filter></defs>
<g filter="url(#ds)" fill="#f00000" stroke="#f00000">
<circle cx="674" cy="185.600" r="4.700" stroke="none"/><path d="M674 185.600V215" stroke-width="1" fill="none"/><path d="M669 213h10L674 227.500z" stroke="none"/>
<circle cx="988.300" cy="205" r="4.700" stroke="none"/><path d="M988.300 205L696 261.200" stroke-width="1" fill="none"/><path d="M676.500 265L695.500 256.600 697.300 267z" stroke="none"/>
<circle cx="677" cy="501.300" r="4.700" stroke="none"/><path d="M677 501.300V479" stroke-width="1" fill="none"/><path d="M671.200 479.700h11.600L677 461z" stroke="none"/>
</g></svg>
<div id="taskbar"></div>
<svg style="left:15.500px;top:739.500px" width="17" height="17" viewBox="0 0 17 17"><path d="M0 2.400L7 1.400V8H0zM8 1.250L17 0V8H8zM0 9h7v6.600l-7-1zM8 9h9v8l-9-1.250z" fill="#fff"/></svg>
<svg style="left:60px;top:735px" width="26" height="26" viewBox="0 0 26 26"><circle cx="14" cy="10.800" r="7.700" fill="none" stroke="#fff" stroke-width="2.300"/><path d="M8.400 17L1.800 23" stroke="#fff" stroke-width="2.500"/></svg>
<svg style="left:111px;top:737px" width="24" height="22" viewBox="0 0 24 22"><defs><linearGradient id="cp1" x1="0" y1="0" x2="0" y2="1"><stop offset="0" stop-color="#1a86ea"/><stop offset=".38" stop-color="#28b0a8"/><stop offset=".68" stop-color="#a4cf36"/><stop offset="1" stop-color="#f8d414"/></linearGradient><linearGradient id="cp2" x1="0" y1="0" x2="0" y2="1"><stop offset="0" stop-color="#ae5cf2"/><stop offset=".5" stop-color="#ea5a98"/><stop offset="1" stop-color="#ff9e3a"/></linearGradient></defs><path d="M13.500 .900h3.200c1.200 0 1.900.600 2.300 1.700l1 3.900h-5.500z" fill="#1b54d8"/><path d="M4.600 15.700h4.200l-.700 5.300H8c-1.100 0-1.700-.500-2.100-1.500z" fill="#f2552c"/><path d="M7.300 .900h6.200c1.500 0 2.200 1 1.800 2.400l-3.300 10.300c-.500 1.400-1.500 2.100-3 2.100H3.200c-1.700 0-2.400-1.100-1.900-2.700L4.400 3.100C4.800 1.700 5.800 .900 7.300 .900z" fill="url(#cp1)"/><path d="M15.700 6.500h5.400c1.700 0 2.400 1.100 1.900 2.700l-3.100 9.700c-.400 1.400-1.400 2.100-2.900 2.100h-6.200c-1.500 0-2.200-1-1.800-2.400l3.300-10c.500-1.400 1.900-2.100 3.400-2.100z" fill="url(#cp2)"/><path d="M14.800 6.500l-2.800 7.100c-.5 1.400-1.500 2.100-3 2.100l.9-2.700L12 7.700c.4-.8 1.400-1.200 2.800-1.200z" fill="#1b2631" opacity=".85"/></svg>
<svg style="left:160px;top:736px" width="23.500" height="23.500" viewBox="0 0 23 23"><defs><linearGradient id="tav" x1="0" y1="0" x2="0" y2="1"><stop offset="0" stop-color="#f2a83a"/><stop offset=".5" stop-color="#da531f"/><stop offset="1" stop-color="#e2335f"/></linearGradient></defs><rect width="23" height="23" rx="1.500" fill="url(#tav)"/><path d="M3 13.500c3 3.500 8 4 13.500 1" fill="none" stroke="#f6c7b8" stroke-width=".9" opacity=".7"/><path d="M18.100 3V21" stroke="#2a2d35" stroke-width="1.700" fill="none"/><path d="M11.600 9.400c-1.300.5-2.700-.4-2.600-1.900.1-1.700 1.800-2.700 3.600-2.400 2.300.4 3.600 2.500 3.400 4.800-.3 2.800-2.600 4.600-5.400 4.500-3-.1-5.600-1.300-7.400-3.200M15.800 11.500l2.300.8" fill="none" stroke="#2a2d35" stroke-width="1.700" stroke-linecap="round"/></svg>
<svg style="left:208px;top:736px" width="24" height="24" viewBox="0 0 24 24"><defs><linearGradient id="npd" x1="0" y1="1" x2="1" y2="0"><stop offset="0" stop-color="#2f9cc0"/><stop offset=".55" stop-color="#8fcfe2"/><stop offset="1" stop-color="#d6eef5"/></linearGradient></defs><path d="M22.300 4.500l1.300.8-.2 14.400-1.300.6z" fill="#c9982e"/><path d="M21.500 4l1.300.7-.400 14.900-4.600 2.700-3.300-2z" fill="#e9eff3"/><path d="M8.900 1.200L21.700 3.900 14.500 20.300 1 16.400z" fill="url(#npd)"/><path d="M8.900 1.200L21.700 3.900 21.300 4.800 8.500 2z" fill="#b9c4c9"/></svg>
<svg style="left:257px;top:735px" width="26" height="26" viewBox="0 0 26 26"><defs><linearGradient id="wag" x1="0" y1="0" x2="0" y2="1"><stop offset="0" stop-color="#9a9fa2"/><stop offset="1" stop-color="#7d8286"/></linearGradient></defs><path d="M13.200 .600a12.200 12 0 0 0-10.600 18L.800 25.300l6.900-1.900A12.200 12 0 1 0 13.200 .600z" fill="#fff"/><path d="M13.200 2a10.800 10.600 0 0 0-9.200 16.200L2.800 23.300l5.100-1.400A10.800 10.600 0 1 0 13.200 2z" fill="url(#wag)"/><path d="M8.800 7.300c.6-.7 1.400-.6 1.800.2l.9 1.900c.2.500.1.900-.3 1.300l-.6.700c.9 1.700 2.200 2.900 3.900 3.700l.9-.9c.3-.3.700-.4 1.200-.1l1.900 1c.7.400.7 1 .2 1.600-.9 1-2.100 1.500-3.400 1.200-3.600-.9-6.800-3.900-7.700-7.400-.3-1.200.2-2.300 1.200-3.200z" fill="#fff"/></svg>
<svg style="left:307px;top:736px" width="24" height="24" viewBox="0 0 24 24"><defs><linearGradient id="fsr" x1="0" y1="0" x2=".3" y2="1"><stop offset="0" stop-color="#ff6a1e"/><stop offset=".6" stop-color="#e01408"/><stop offset="1" stop-color="#c80000"/></linearGradient><linearGradient id="fsg" x1="1" y1="0" x2="0" y2="1"><stop offset="0" stop-color="#36c22e"/><stop offset="1" stop-color="#0c8a1c"/></linearGradient><linearGradient id="fsw" x1="0" y1="0" x2="1" y2="1"><stop offset="0" stop-color="#ffffff"/><stop offset="1" stop-color="#d9d9d9"/></linearGradient></defs><rect x="1" y="1.900" width="22" height="20.700" rx="2.200" fill="url(#fsw)"/><path d="M12.800 0C10 2.500 4 9 .3 15l6.600 2c.6-5 1.600-10 3-13z" fill="url(#fsg)"/><path d="M4.900 3.200C12 4 18 10 20.100 16.700L11.500 22c0-7-1.500-14-3.500-17z" fill="url(#fsr)"/></svg>
<svg style="left:355.500px;top:736px" width="24" height="24" viewBox="0 0 24 24"><circle cx="12" cy="12" r="12" fill="#0b5cff"/><text x="12" y="16" font-family="Liberation Sans,sans-serif" font-size="11.500" font-weight="bold" fill="#fff" text-anchor="middle">zm</text></svg>
<svg style="left:405px;top:736px" width="24" height="24" viewBox="0 0 24 24"><rect x="11" y="3.500" width="12" height="17" fill="#fff" stroke="#1e7145" stroke-width="1"/><path d="M14 6.500h7M14 9.500h7M14 12.500h7M14 15.500h7M17.500 4v16" stroke="#1e7145" stroke-width="1.200"/><path d="M0 3l14-2.500v23L0 21z" fill="#1e7145"/><text x="7" y="16.500" font-family="Liberation Sans,sans-serif" font-size="12" font-weight="bold" fill="#fff" text-anchor="middle">X</text></svg>
<svg style="left:454px;top:736px" width="24" height="24" viewBox="0 0 24 24"><rect x="11" y="3.500" width="12" height="17" fill="#fff" stroke="#2b579a" stroke-width="1"/><path d="M14 7h7M14 9.500h7M14 12h7M14 14.500h7M14 17h7" stroke="#2b579a" stroke-width="1.200"/><path d="M0 3l14-2.500v23L0 21z" fill="#2b579a"/><text x="7" y="16.500" font-family="Liberation Sans,sans-serif" font-size="12" font-weight="bold" fill="#fff" text-anchor="middle">W</text></svg>
<svg style="left:503px;top:736px" width="24" height="24" viewBox="0 0 24 24"><rect x="11" y="3.500" width="12" height="17" fill="#fff" stroke="#3a53a4" stroke-width="1"/><path d="M17 8l2.500-2.500L22 8l-2.500 2.500zM15.500 12.500h4v4h-4z" fill="none" stroke="#3a53a4" stroke-width="1.100"/><path d="M0 3l14-2.500v23L0 21z" fill="#3a53a4"/><text x="7" y="16.500" font-family="Liberation Sans,sans-serif" font-size="12" font-weight="bold" fill="#fff" text-anchor="middle">V</text></svg>
<svg style="left:553px;top:737px" width="22" height="22" viewBox="0 0 22 22"><defs><linearGradient id="stk" x1="0" y1="0" x2="0" y2="1"><stop offset="0" stop-color="#ffd900"/><stop offset="1" stop-color="#f8c800"/></linearGradient></defs><rect width="22" height="22" rx="1" fill="url(#stk)"/><path d="M21.200 11.300V20.900H11.400z" fill="#e5a600"/><path d="M11.400 11.300H21.200L11.400 20.900z" fill="#3a3a3a"/></svg>
<svg style="left:601px;top:736px" width="24" height="24" viewBox="0 0 24 24"><defs><clipPath id="scl"><rect width="24" height="24"/></clipPath></defs><rect width="24" height="24" fill="#3f8ccb"/><g clip-path="url(#scl)"><path d="M24 5.600C19 2.200 8.500 1.500 5.300 6.300 2.600 10.500 8.500 11.600 12 12.300c3.500.7 9.600 1.500 7 5.800C16.500 22 6 22.300 0 18.700" fill="none" stroke="#fff" stroke-width="6.400"/></g><rect x=".6" y=".6" width="22.800" height="22.800" fill="none" stroke="#3f8ccb" stroke-width="1.200"/></svg>
<svg style="left:650.500px;top:736px" width="23" height="24" viewBox="0 0 23 24"><defs><radialGradient id="ff" cx=".7" cy=".2" r="1"><stop offset="0" stop-color="#ffe226"/><stop offset=".45" stop-color="#ff8a16"/><stop offset=".8" stop-color="#f5305e"/><stop offset="1" stop-color="#c12ea0"/></radialGradient></defs><path d="M14 0c3 2 4 4.500 4 6 2 1.500 5 5 5 8.500A11.500 10.500 0 0 1 0 14c0-4 2-7.500 4.500-9 0 1.500.5 2.500 1.500 3 2-1 4-3 8-8z" fill="url(#ff)"/><circle cx="11.500" cy="13.500" r="5.300" fill="#7a3bd1"/><path d="M5 9c3-1 6 0 7 2-2 0-3 1-3 2.500 0 2 2 3.500 4.500 3 -3 3-9 1-9.500-3.500C4 11.500 4.300 10 5 9z" fill="#ff9a1f"/></svg>
<div class="a" style="left:687px;top:728px;width:47.500px;height:40px;background:#47525c"></div>
<svg style="left:699px;top:736px" width="24" height="26" viewBox="0 0 24 26"><circle cx="11.500" cy="11.500" r="11.500" fill="#fff"/><path d="M11.500 0A11.500 11.500 0 0 1 21.460 5.750H11.500A5.750 5.750 0 0 0 6.520 8.630L1.540 5.750A11.500 11.500 0 0 1 11.500 0z" fill="#ea4335"/><path d="M21.460 5.750A11.500 11.500 0 0 1 11.500 23l4.980-8.630A5.750 5.750 0 0 0 16.480 8.630z" fill="#fbbc04" transform="rotate(0)"/><path d="M1.540 5.750L6.520 14.370A5.750 5.750 0 0 0 11.500 17.250L11.500 23A11.500 11.500 0 0 1 1.540 5.750z" fill="#34a853"/><path d="M11.500 23l4.980-8.630a5.750 5.750 0 0 1-9.960 0L1.540 5.750" fill="none"/><circle cx="11.500" cy="11.500" r="5.200" fill="#fff"/><circle cx="11.500" cy="11.500" r="4.200" fill="#4285f4"/><circle cx="17" cy="19" r="6.700" fill="#8b8577"/><rect x="14.500" y="17" width="5" height="8.500" fill="#e6e3dd"/><circle cx="17" cy="15.500" r="2" fill="#5a463a"/></svg>
<svg style="left:747.500px;top:736px" width="24.500" height="24" viewBox="0 0 24.500 24"><rect width="24.500" height="24" fill="#ef443b"/><path d="M8.500 7l5 5-5 5-5-5z" fill="#fff"/><path d="M13 7.200l1.700-1.700 6.500 6.500-6.500 6.500-1.700-1.700 4.800-4.800z" fill="#fff"/></svg>
<div class="a" style="left:543.7px;top:766px;width:39.299999999999955px;height:2px;background:#76b9ed"></div>
<div class="a" style="left:592.5px;top:766px;width:40.5px;height:2px;background:#76b9ed"></div>
<div class="a" style="left:687px;top:766px;width:47.5px;height:2px;background:#76b9ed"></div>
<svg style="left:1158px;top:743px" width="14" height="10" viewBox="0 0 14 10"><path d="M1 8.500L7 2.500l6 6" fill="none" stroke="#fff" stroke-width="1.300"/></svg>
<svg style="left:1180px;top:741px" width="18" height="14" viewBox="0 0 18 14"><path d="M1 5h2.500L7 1.500v11L3.500 9H1z" fill="none" stroke="#fff" stroke-width="1.100" stroke-linejoin="round"/><path d="M9.500 4.500a3.500 3.500 0 0 1 0 5M11.800 2.500a6.300 6.300 0 0 1 0 9M14 .8a8.800 8.800 0 0 1 0 12.400" fill="none" stroke="#fff" stroke-width="1.100"/></svg>
<svg style="left:1207px;top:742px" width="15" height="14" viewBox="0 0 15 14"><g fill="none" stroke="#fff" stroke-width="1.100"><path d="M1 12.500A11.500 11.500 0 0 1 12.500 1"/><path d="M4.200 12.500A8.300 8.300 0 0 1 12.500 4.200"/><path d="M7.400 12.500A5.100 5.100 0 0 1 12.500 7.400"/></g><circle cx="11.800" cy="11.800" r="1.500" fill="#fff"/></svg>
<svg style="left:1231px;top:740px" width="13" height="17" viewBox="0 0 13 17"><g fill="none" stroke="#fff" stroke-width="1.100"><rect x="1" y="5.500" width="7" height="6" rx="1"/><path d="M8 7.500l3.500-1.800v5.600L8 9.500z"/><path d="M2.500 2.800a5.500 5.500 0 0 1 8 0M2.500 14.200a5.500 5.500 0 0 0 8 0"/></g></svg>
<span class="t" style="left:1259px;top:730.80px;line-height:17px;font-size:12px;color:#fff;letter-spacing:-0.190px;">8:17 AM</span>
<span class="t" style="left:1258px;top:748.50px;line-height:17px;font-size:12px;color:#fff;letter-spacing:-0.089px;">3/4/2026</span>
<svg style="left:1325px;top:740px" width="17" height="16" viewBox="0 0 17 16"><path d="M.700 .700h15.600v11.300h-5.300l-2.500 2.500-2.500-2.500H.700z" fill="none" stroke="#fff" stroke-width="1.300"/></svg>
<div class="a" style="left:1361px;top:728px;width:1px;height:40px;background:#6a737b"></div>
</body></html>
